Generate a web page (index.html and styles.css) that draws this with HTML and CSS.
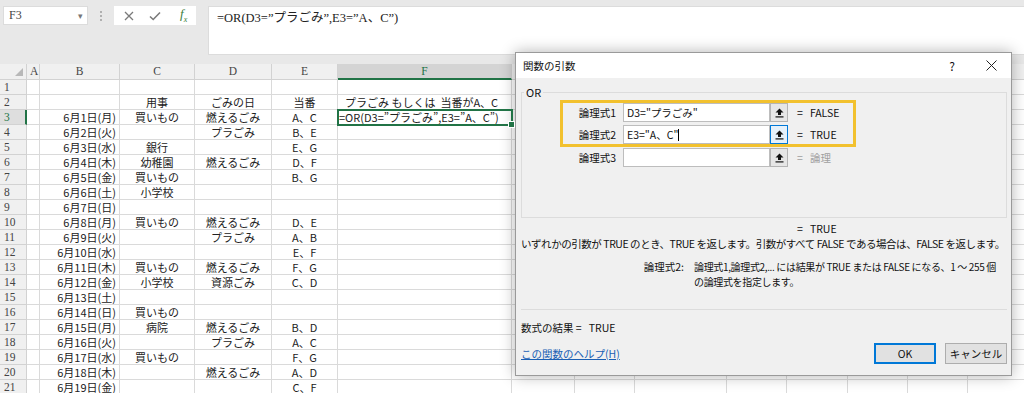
FILE: index.html
```html
<!DOCTYPE html>
<html lang="ja">
<head>
  <meta charset="UTF-8" />
  <title>関数の引数</title>
  <link rel="stylesheet" href="styles.css">
</head>
<body>

  <div class="topbar">
    <div class="namebox">F3<span class="namebox-caret">▾</span></div>
    <div class="grip"><span></span><span></span><span></span></div>
    <div class="fx-buttons">
      <svg class="fx-icon" width="10" height="10" viewBox="0 0 10 10"><path d="M1 1 L9 9 M9 1 L1 9" stroke="#7a7a7a" stroke-width="1.3" fill="none"/></svg>
      <svg class="fx-icon" width="12" height="10" viewBox="0 0 12 10"><path d="M1 5.5 L4.2 8.5 L11 1.5" stroke="#7a7a7a" stroke-width="1.6" fill="none"/></svg>
      <span class="fx-label">f<sub>x</sub></span>
    </div>
    <div class="formula">=OR(D3=”プラごみ”,E3=”A、C”)</div>
  </div>

  <div class="sheet">
    <div class="row head">
      <div class="cell corner"></div>
      <div class="cell">A</div><div class="cell">B</div><div class="cell">C</div><div class="cell">D</div><div class="cell">E</div>
      <div class="cell col-sel">F</div>
      <div class="cell"></div><div class="cell"></div><div class="cell"></div><div class="cell"></div><div class="cell"></div><div class="cell"></div><div class="cell"></div><div class="cell"></div>
    </div>
    <div class="row"><div class="cell rh">1</div><div class="cell"></div><div class="cell"></div><div class="cell"></div><div class="cell"></div><div class="cell"></div><div class="cell"></div><div class="cell"></div><div class="cell"></div><div class="cell"></div><div class="cell"></div><div class="cell"></div><div class="cell"></div><div class="cell"></div><div class="cell"></div></div>
    <div class="row"><div class="cell rh">2</div><div class="cell"></div><div class="cell"></div><div class="cell c">用事</div><div class="cell c">ごみの日</div><div class="cell c">当番</div><div class="cell f">プラごみ もしくは&nbsp; 当番がA、C</div><div class="cell"></div><div class="cell"></div><div class="cell"></div><div class="cell"></div><div class="cell"></div><div class="cell"></div><div class="cell"></div><div class="cell"></div></div>
    <div class="row"><div class="cell rh row-sel">3</div><div class="cell"></div><div class="cell r">6月1日(月)</div><div class="cell c">買いもの</div><div class="cell c">燃えるごみ</div><div class="cell c">A、C</div><div class="cell active">=OR(D3=”プラごみ”,E3=”A、C”)</div><div class="cell"></div><div class="cell"></div><div class="cell"></div><div class="cell"></div><div class="cell"></div><div class="cell"></div><div class="cell"></div><div class="cell"></div></div>
    <div class="row"><div class="cell rh">4</div><div class="cell"></div><div class="cell r">6月2日(火)</div><div class="cell c"></div><div class="cell c">プラごみ</div><div class="cell c">B、E</div><div class="cell"></div><div class="cell"></div><div class="cell"></div><div class="cell"></div><div class="cell"></div><div class="cell"></div><div class="cell"></div><div class="cell"></div><div class="cell"></div></div>
    <div class="row"><div class="cell rh">5</div><div class="cell"></div><div class="cell r">6月3日(水)</div><div class="cell c">銀行</div><div class="cell c"></div><div class="cell c">E、G</div><div class="cell"></div><div class="cell"></div><div class="cell"></div><div class="cell"></div><div class="cell"></div><div class="cell"></div><div class="cell"></div><div class="cell"></div><div class="cell"></div></div>
    <div class="row"><div class="cell rh">6</div><div class="cell"></div><div class="cell r">6月4日(木)</div><div class="cell c">幼稚園</div><div class="cell c">燃えるごみ</div><div class="cell c">D、F</div><div class="cell"></div><div class="cell"></div><div class="cell"></div><div class="cell"></div><div class="cell"></div><div class="cell"></div><div class="cell"></div><div class="cell"></div><div class="cell"></div></div>
    <div class="row"><div class="cell rh">7</div><div class="cell"></div><div class="cell r">6月5日(金)</div><div class="cell c">買いもの</div><div class="cell c"></div><div class="cell c">B、G</div><div class="cell"></div><div class="cell"></div><div class="cell"></div><div class="cell"></div><div class="cell"></div><div class="cell"></div><div class="cell"></div><div class="cell"></div><div class="cell"></div></div>
    <div class="row"><div class="cell rh">8</div><div class="cell"></div><div class="cell r">6月6日(土)</div><div class="cell c">小学校</div><div class="cell c"></div><div class="cell c"></div><div class="cell"></div><div class="cell"></div><div class="cell"></div><div class="cell"></div><div class="cell"></div><div class="cell"></div><div class="cell"></div><div class="cell"></div><div class="cell"></div></div>
    <div class="row"><div class="cell rh">9</div><div class="cell"></div><div class="cell r">6月7日(日)</div><div class="cell c"></div><div class="cell c"></div><div class="cell c"></div><div class="cell"></div><div class="cell"></div><div class="cell"></div><div class="cell"></div><div class="cell"></div><div class="cell"></div><div class="cell"></div><div class="cell"></div><div class="cell"></div></div>
    <div class="row"><div class="cell rh">10</div><div class="cell"></div><div class="cell r">6月8日(月)</div><div class="cell c">買いもの</div><div class="cell c">燃えるごみ</div><div class="cell c">D、E</div><div class="cell"></div><div class="cell"></div><div class="cell"></div><div class="cell"></div><div class="cell"></div><div class="cell"></div><div class="cell"></div><div class="cell"></div><div class="cell"></div></div>
    <div class="row"><div class="cell rh">11</div><div class="cell"></div><div class="cell r">6月9日(火)</div><div class="cell c"></div><div class="cell c">プラごみ</div><div class="cell c">A、B</div><div class="cell"></div><div class="cell"></div><div class="cell"></div><div class="cell"></div><div class="cell"></div><div class="cell"></div><div class="cell"></div><div class="cell"></div><div class="cell"></div></div>
    <div class="row"><div class="cell rh">12</div><div class="cell"></div><div class="cell r">6月10日(水)</div><div class="cell c"></div><div class="cell c"></div><div class="cell c">E、F</div><div class="cell"></div><div class="cell"></div><div class="cell"></div><div class="cell"></div><div class="cell"></div><div class="cell"></div><div class="cell"></div><div class="cell"></div><div class="cell"></div></div>
    <div class="row"><div class="cell rh">13</div><div class="cell"></div><div class="cell r">6月11日(木)</div><div class="cell c">買いもの</div><div class="cell c">燃えるごみ</div><div class="cell c">F、G</div><div class="cell"></div><div class="cell"></div><div class="cell"></div><div class="cell"></div><div class="cell"></div><div class="cell"></div><div class="cell"></div><div class="cell"></div><div class="cell"></div></div>
    <div class="row"><div class="cell rh">14</div><div class="cell"></div><div class="cell r">6月12日(金)</div><div class="cell c">小学校</div><div class="cell c">資源ごみ</div><div class="cell c">C、D</div><div class="cell"></div><div class="cell"></div><div class="cell"></div><div class="cell"></div><div class="cell"></div><div class="cell"></div><div class="cell"></div><div class="cell"></div><div class="cell"></div></div>
    <div class="row"><div class="cell rh">15</div><div class="cell"></div><div class="cell r">6月13日(土)</div><div class="cell c"></div><div class="cell c"></div><div class="cell c"></div><div class="cell"></div><div class="cell"></div><div class="cell"></div><div class="cell"></div><div class="cell"></div><div class="cell"></div><div class="cell"></div><div class="cell"></div><div class="cell"></div></div>
    <div class="row"><div class="cell rh">16</div><div class="cell"></div><div class="cell r">6月14日(日)</div><div class="cell c">買いもの</div><div class="cell c"></div><div class="cell c"></div><div class="cell"></div><div class="cell"></div><div class="cell"></div><div class="cell"></div><div class="cell"></div><div class="cell"></div><div class="cell"></div><div class="cell"></div><div class="cell"></div></div>
    <div class="row"><div class="cell rh">17</div><div class="cell"></div><div class="cell r">6月15日(月)</div><div class="cell c">病院</div><div class="cell c">燃えるごみ</div><div class="cell c">B、D</div><div class="cell"></div><div class="cell"></div><div class="cell"></div><div class="cell"></div><div class="cell"></div><div class="cell"></div><div class="cell"></div><div class="cell"></div><div class="cell"></div></div>
    <div class="row"><div class="cell rh">18</div><div class="cell"></div><div class="cell r">6月16日(火)</div><div class="cell c"></div><div class="cell c">プラごみ</div><div class="cell c">A、C</div><div class="cell"></div><div class="cell"></div><div class="cell"></div><div class="cell"></div><div class="cell"></div><div class="cell"></div><div class="cell"></div><div class="cell"></div><div class="cell"></div></div>
    <div class="row"><div class="cell rh">19</div><div class="cell"></div><div class="cell r">6月17日(水)</div><div class="cell c">買いもの</div><div class="cell c"></div><div class="cell c">F、G</div><div class="cell"></div><div class="cell"></div><div class="cell"></div><div class="cell"></div><div class="cell"></div><div class="cell"></div><div class="cell"></div><div class="cell"></div><div class="cell"></div></div>
    <div class="row"><div class="cell rh">20</div><div class="cell"></div><div class="cell r">6月18日(木)</div><div class="cell c"></div><div class="cell c">燃えるごみ</div><div class="cell c">A、D</div><div class="cell"></div><div class="cell"></div><div class="cell"></div><div class="cell"></div><div class="cell"></div><div class="cell"></div><div class="cell"></div><div class="cell"></div><div class="cell"></div></div>
    <div class="row"><div class="cell rh">21</div><div class="cell"></div><div class="cell r">6月19日(金)</div><div class="cell c"></div><div class="cell c"></div><div class="cell c">C、F</div><div class="cell"></div><div class="cell"></div><div class="cell"></div><div class="cell"></div><div class="cell"></div><div class="cell"></div><div class="cell"></div><div class="cell"></div><div class="cell"></div></div>
  </div>

  <div class="dialog">
    <div class="dlg-title">
      <span class="dlg-title-text">関数の引数</span>
      <span class="dlg-help">?</span>
      <svg class="dlg-close" width="11" height="11" viewBox="0 0 11 11"><path d="M0.5 0.5 L10.5 10.5 M10.5 0.5 L0.5 10.5" stroke="#222" stroke-width="1" fill="none"/></svg>
    </div>

    <div class="dlg-body">
      <fieldset class="group">
        <legend>OR</legend>
        <div class="highlight">
          <div class="arg">
            <span class="arg-label">論理式1</span>
            <span class="arg-input">D3="プラごみ"</span>
            <span class="arg-btn"><svg width="9" height="10" viewBox="0 0 9 10"><path d="M4.5 0.5 L0.5 4.5 H3 V7 H6 V4.5 H8.5 Z" fill="#111"/><rect x="0.5" y="8.3" width="8" height="1.2" fill="#111"/></svg></span>
            <span class="arg-val">=&nbsp;&nbsp; FALSE</span>
          </div>
          <div class="arg">
            <span class="arg-label">論理式2</span>
            <span class="arg-input">E3="A、C"<span class="caret"></span></span>
            <span class="arg-btn focus"><svg width="9" height="10" viewBox="0 0 9 10"><path d="M4.5 0.5 L0.5 4.5 H3 V7 H6 V4.5 H8.5 Z" fill="#111"/><rect x="0.5" y="8.3" width="8" height="1.2" fill="#111"/></svg></span>
            <span class="arg-val">=&nbsp;&nbsp; TRUE</span>
          </div>
        </div>
        <div class="arg arg-plain">
          <span class="arg-label">論理式3</span>
          <span class="arg-input"></span>
          <span class="arg-btn"><svg width="9" height="10" viewBox="0 0 9 10"><path d="M4.5 0.5 L0.5 4.5 H3 V7 H6 V4.5 H8.5 Z" fill="#111"/><rect x="0.5" y="8.3" width="8" height="1.2" fill="#111"/></svg></span>
          <span class="arg-val muted">=&nbsp;&nbsp; 論理</span>
        </div>
      </fieldset>

      <div class="result">=&nbsp;&nbsp; TRUE</div>
      <div class="desc">いずれかの引数が TRUE のとき、TRUE を返します。引数がすべて FALSE である場合は、FALSE を返します。</div>

      <div class="detail">
        <span class="detail-label">論理式2:</span>
        <span class="detail-text">論理式1,論理式2,... には結果が TRUE または FALSE になる、1 ～ 255 個<br>の論理式を指定します。</span>
      </div>

      <div class="formula-result">数式の結果 =&nbsp;&nbsp; TRUE</div>

      <div class="dlg-footer">
        <span class="help-link">この関数のヘルプ(H)</span>
        <button class="btn btn-ok">OK</button>
        <button class="btn">キャンセル</button>
      </div>
    </div>
  </div>

</body>
</html>
```

FILE: styles.css
```css
body {
  margin: 0;
  width: 1024px;
  height: 393px;
  overflow: hidden;
  position: relative;
  background: #fff;
  font-family: "Noto Sans CJK JP", sans-serif;
  color: #222;
}

/* formula bar */

.topbar {
  height: 64px;
  box-sizing: border-box;
  padding-top: 6px;
  background: #e8e8e8;
  display: flex;
  align-items: flex-start;
}

.namebox {
  margin-left: 3px;
  width: 85px;
  height: 19px;
  box-sizing: border-box;
  background: #fff;
  border: 1px solid #dcdcdc;
  display: flex;
  align-items: center;
  padding-left: 5px;
  font-family: "Liberation Serif", serif;
  font-size: 12px;
  color: #444;
}

.namebox-caret {
  margin-left: auto;
  margin-right: 4px;
  font-size: 9px;
  color: #777;
}

.grip {
  width: 26px;
  height: 19px;
  display: flex;
  flex-direction: column;
  align-items: center;
  justify-content: center;
  gap: 2px;
}

.grip span {
  width: 2px;
  height: 2px;
  background: #b0b0b0;
}

.fx-buttons {
  width: 82px;
  height: 19px;
  background: #fff;
  display: flex;
  align-items: center;
  gap: 15px;
  padding-left: 10px;
  box-sizing: border-box;
}

.fx-label {
  font-family: "Liberation Serif", serif;
  font-style: italic;
  font-size: 13px;
  color: #3b7d3b;
  margin-left: 4px;
  line-height: 1;
}

.fx-label sub {
  font-size: 8px;
}

.formula {
  margin-left: 12px;
  flex: 1;
  height: 49px;
  box-sizing: border-box;
  background: #fff;
  border: 1px solid #dcdcdc;
  border-right: none;
  padding: 0 8px;
  font-family: "Liberation Serif", "Noto Sans CJK JP", serif;
  font-size: 12.5px;
  color: #222;
}

/* sheet grid */

.sheet {
  font-size: 11px;
}

.row {
  display: grid;
  grid-template-columns: 27px 13px 80px 75px 77px 66px 174px 63px 60px 92px 60px 61px 60px 60px 60px;
  height: 15px;
}

.cell {
  box-sizing: border-box;
  border-right: 1px solid #dadada;
  border-bottom: 1px solid #dadada;
  padding: 0 3px;
  line-height: 14px;
  white-space: nowrap;
  overflow: hidden;
}

.head {
  height: 16px;
}

.head .cell {
  background: #f0f0f0;
  border-color: #d2d2d2;
  text-align: center;
  font-family: "Liberation Serif", serif;
  font-size: 11.5px;
  color: #444;
  line-height: 15px;
}

.head .corner {
  position: relative;
}

.corner::after {
  content: "";
  position: absolute;
  right: 3px;
  bottom: 3px;
  border-left: 8px solid transparent;
  border-bottom: 8px solid #b8b8b8;
}

.head .col-sel {
  background: #d4d4d4;
  color: #217346;
  border-bottom: 2px solid #217346;
}

.rh {
  background: #f0f0f0;
  border-color: #d2d2d2;
  font-family: "Liberation Serif", serif;
  font-size: 11.5px;
  color: #444;
  padding-left: 4px;
}

.rh.row-sel {
  background: #dedede;
  color: #217346;
  border-right: 2px solid #217346;
}

.r {
  text-align: right;
}

.c {
  text-align: center;
}

.f {
  padding-left: 7px;
}

.active {
  position: relative;
  overflow: visible;
  outline: 2px solid #217346;
  outline-offset: -1px;
  padding: 0 1px;
  z-index: 1;
}

.active::after {
  content: "";
  position: absolute;
  right: -4px;
  bottom: -4px;
  width: 5px;
  height: 5px;
  background: #217346;
  border: 1px solid #fff;
}

/* dialog */

.dialog {
  position: absolute;
  left: 515px;
  top: 52px;
  width: 497px;
  height: 324px;
  box-sizing: border-box;
  border: 1px solid #9a9a9a;
  background: #f0f0f0;
  box-shadow: 0 0 14px rgba(0, 0, 0, 0.3);
  font-size: 10.5px;
  color: #111;
  display: flex;
  flex-direction: column;
}

.dlg-title {
  height: 25px;
  background: #fff;
  display: flex;
  align-items: center;
  padding-left: 7px;
  flex-shrink: 0;
}

.dlg-help {
  margin-left: auto;
  margin-right: 31px;
  font-size: 12px;
}

.dlg-close {
  margin-right: 14px;
}

.dlg-body {
  padding: 0 4px 0 5px;
  display: flex;
  flex-direction: column;
}

.group {
  margin: 7px 0 0;
  padding: 0 0 0 38px;
  height: 133px;
  box-sizing: border-box;
  border: 1px solid #dcdcdc;
  min-width: 0;
}

.group legend {
  margin-left: -36px;
  padding: 0 2px;
  line-height: 14px;
  font-size: 11px;
}

.highlight {
  width: 296px;
  box-sizing: border-box;
  margin-top: 1px;
  border: 3px solid #f2c12e;
  display: flex;
  flex-direction: column;
  gap: 3px;
}

.arg {
  display: flex;
  align-items: center;
  height: 19px;
}

.arg-plain {
  margin-top: 1px;
  margin-left: 3px;
}

.arg-label {
  width: 53px;
  text-align: right;
  margin-right: 7px;
}

.arg-input {
  width: 147px;
  height: 19px;
  box-sizing: border-box;
  background: #fff;
  border: 1px solid #bdbdbd;
  padding-left: 3px;
  line-height: 17px;
  white-space: nowrap;
}

.caret {
  display: inline-block;
  width: 1px;
  height: 12px;
  background: #000;
  vertical-align: -2px;
}

.arg-btn {
  width: 18px;
  height: 19px;
  box-sizing: border-box;
  background: #e6e6e6;
  border: 1px solid #b4b4b4;
  display: flex;
  align-items: center;
  justify-content: center;
}

.arg-btn.focus {
  background: #e5f1fb;
  border-color: #0078d7;
}

.arg-val {
  margin-left: 9px;
  white-space: nowrap;
}

.muted {
  color: #a0a0a0;
}

.result {
  margin-top: 4px;
  padding-left: 276px;
  line-height: 14px;
}

.desc {
  line-height: 15px;
  white-space: nowrap;
  letter-spacing: -0.45px;
}

.detail {
  margin-top: 8px;
  display: grid;
  grid-template-columns: 173px 1fr;
  line-height: 15px;
}

.detail-label {
  text-align: right;
  padding-right: 10px;
}

.detail-text {
  white-space: nowrap;
  font-size: 10px;
  letter-spacing: -0.35px;
}

.formula-result {
  margin-top: 20px;
  border-top: 1px solid #dcdcdc;
  padding-top: 11px;
  line-height: 14px;
}

.dlg-footer {
  margin-top: 8px;
  display: flex;
  align-items: center;
  gap: 9px;
}

.help-link {
  color: #1a5fb4;
  text-decoration: underline;
  margin-right: auto;
}

.btn {
  width: 62px;
  height: 21px;
  box-sizing: border-box;
  background: #e1e1e1;
  border: 1px solid #adadad;
  font-family: "Noto Sans CJK JP", sans-serif;
  font-size: 10.5px;
  color: #111;
  padding: 0;
}

.btn-ok {
  border: 2px solid #0078d7;
}
```
